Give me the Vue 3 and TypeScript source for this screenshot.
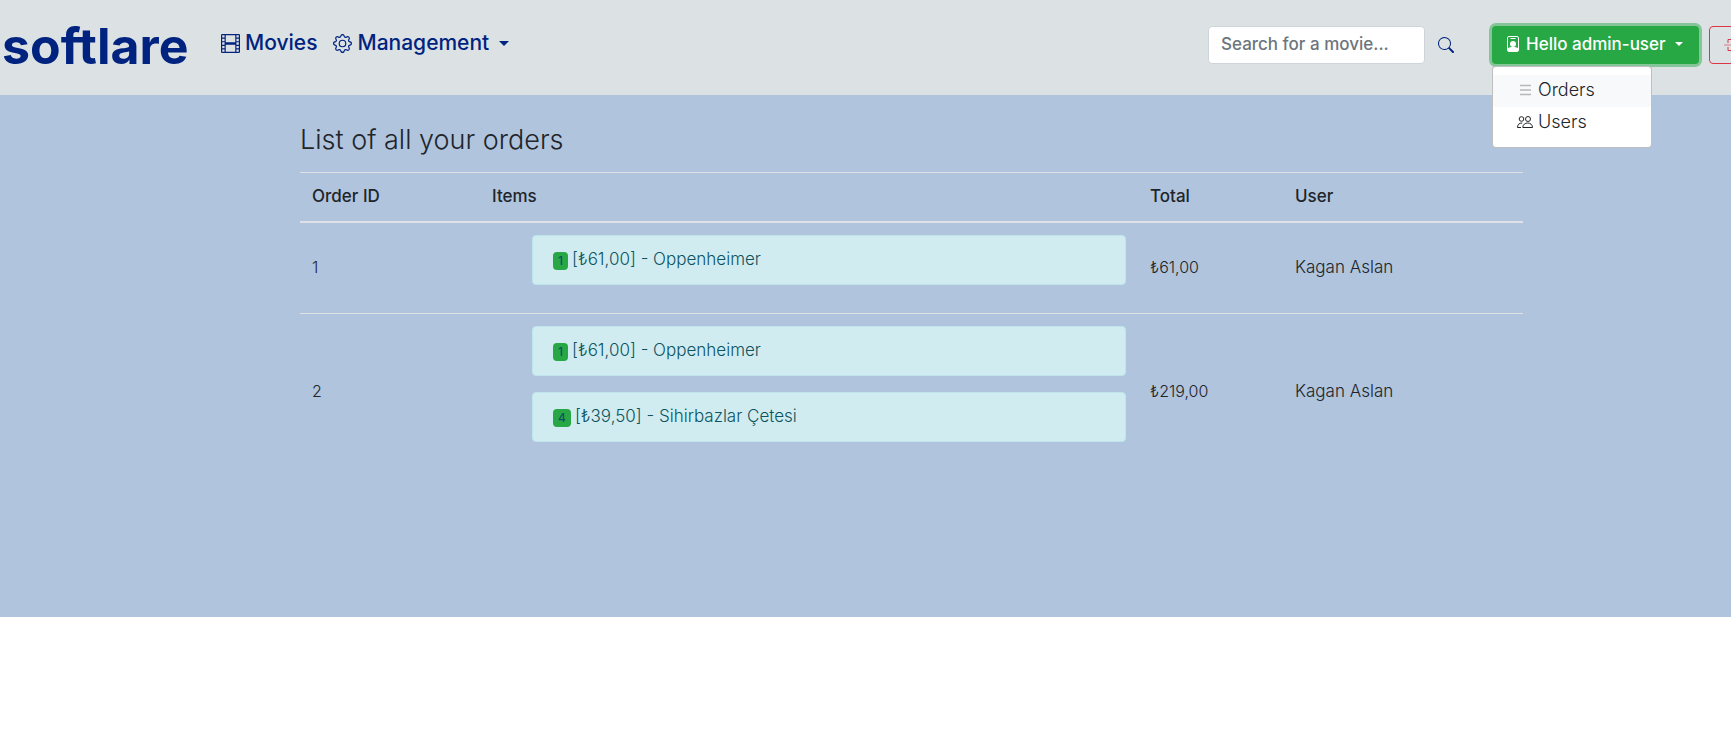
<script setup lang="ts">
import { ref } from 'vue'

interface OrderItem {
  quantity: number
  price: string
  title: string
}

interface Order {
  id: number
  items: OrderItem[]
  total: string
  user: string
}

const search = ref('')
const menuOpen = ref(true)

const orders: Order[] = [
  {
    id: 1,
    items: [{ quantity: 1, price: '₺61,00', title: 'Oppenheimer' }],
    total: '₺61,00',
    user: 'Kagan Aslan',
  },
  {
    id: 2,
    items: [
      { quantity: 1, price: '₺61,00', title: 'Oppenheimer' },
      { quantity: 4, price: '₺39,50', title: 'Sihirbazlar Çetesi' },
    ],
    total: '₺219,00',
    user: 'Kagan Aslan',
  },
]
</script>

<template>
  <div class="page">
    <header class="navbar">
      <a class="brand" href="#">softlare</a>
      <nav class="links">
        <a class="nav-link" href="#">
          <svg class="icon" viewBox="0 0 16 16" fill="currentColor" aria-hidden="true">
            <path d="M0 1a1 1 0 0 1 1-1h14a1 1 0 0 1 1 1v14a1 1 0 0 1-1 1H1a1 1 0 0 1-1-1V1zm4 0v6h8V1H4zm8 8H4v6h8V9zM1 1v2h2V1H1zm2 3H1v2h2V4zM1 7v2h2V7H1zm2 3H1v2h2v-2zm-2 3v2h2v-2H1zM15 1h-2v2h2V1zm-2 3v2h2V4h-2zm2 3h-2v2h2V7zm-2 3v2h2v-2h-2zm2 3h-2v2h2v-2z" />
          </svg>
          <span>Movies</span>
        </a>
        <button class="nav-link" type="button">
          <svg class="icon" viewBox="0 0 16 16" fill="currentColor" aria-hidden="true">
            <path d="M8 4.754a3.246 3.246 0 1 0 0 6.492 3.246 3.246 0 0 0 0-6.492zM5.754 8a2.246 2.246 0 1 1 4.492 0 2.246 2.246 0 0 1-4.492 0z" />
            <path d="M9.796 1.343c-.527-1.79-3.065-1.79-3.592 0l-.094.319a.873.873 0 0 1-1.255.52l-.292-.16c-1.64-.892-3.433.902-2.54 2.541l.159.292a.873.873 0 0 1-.52 1.255l-.319.094c-1.79.527-1.79 3.065 0 3.592l.319.094a.873.873 0 0 1 .52 1.255l-.16.292c-.892 1.64.901 3.434 2.541 2.54l.292-.159a.873.873 0 0 1 1.255.52l.094.319c.527 1.79 3.065 1.79 3.592 0l.094-.319a.873.873 0 0 1 1.255-.52l.292.16c1.64.893 3.434-.902 2.54-2.541l-.159-.292a.873.873 0 0 1 .52-1.255l.319-.094c1.79-.527 1.79-3.065 0-3.592l-.319-.094a.873.873 0 0 1-.52-1.255l.16-.292c.893-1.64-.902-3.433-2.541-2.54l-.292.159a.873.873 0 0 1-1.255-.52l-.094-.319zm-2.633.283c.246-.835 1.428-.835 1.674 0l.094.319a1.873 1.873 0 0 0 2.693 1.115l.291-.16c.764-.415 1.6.42 1.184 1.185l-.159.292a1.873 1.873 0 0 0 1.116 2.692l.318.094c.835.246.835 1.428 0 1.674l-.319.094a1.873 1.873 0 0 0-1.115 2.693l.16.291c.415.764-.42 1.6-1.185 1.184l-.291-.159a1.873 1.873 0 0 0-2.693 1.116l-.094.318c-.246.835-1.428.835-1.674 0l-.094-.319a1.873 1.873 0 0 0-2.692-1.115l-.292.16c-.764.415-1.6-.42-1.184-1.185l.159-.291A1.873 1.873 0 0 0 1.945 8.93l-.319-.094c-.835-.246-.835-1.428 0-1.674l.319-.094A1.873 1.873 0 0 0 3.06 4.377l-.16-.292c-.415-.764.42-1.6 1.185-1.184l.292.159a1.873 1.873 0 0 0 2.692-1.115l.094-.319z" />
          </svg>
          <span>Management</span>
          <i class="caret"></i>
        </button>
      </nav>

      <form class="search" @submit.prevent>
        <input v-model="search" type="text" placeholder="Search for a movie..." aria-label="Search for a movie" />
        <button type="submit" aria-label="Search">
          <svg viewBox="0 0 16 16" fill="currentColor" aria-hidden="true">
            <path d="M11.742 10.344a6.5 6.5 0 1 0-1.397 1.398h-.001c.03.04.062.078.098.115l3.85 3.85a1 1 0 0 0 1.415-1.414l-3.85-3.85a1.007 1.007 0 0 0-.115-.1zM12 6.5a5.5 5.5 0 1 1-11 0 5.5 5.5 0 0 1 11 0z" />
          </svg>
        </button>
      </form>

      <div class="account">
        <button class="account-toggle" type="button" :aria-expanded="menuOpen" @click="menuOpen = !menuOpen">
          <svg viewBox="0 0 16 16" aria-hidden="true">
            <rect x="2.5" y="0.5" width="11" height="15" rx="1.5" fill="none" stroke="currentColor" />
            <path d="M5.500 2.500h5" stroke="currentColor" />
            <circle cx="8" cy="8" r="3" fill="currentColor" />
            <path d="M2.500 12.500c1.500-1.300 3.500-1.500 5.500-1.500s4 .2 5.500 1.500v2.500h-11z" fill="currentColor" />
          </svg>
          <span>Hello admin-user</span>
          <i class="caret small"></i>
        </button>
        <div v-if="menuOpen" class="menu">
          <a class="active" href="#">
            <svg class="muted" viewBox="0 0 16 16" fill="none" stroke="currentColor" stroke-width="1.500" aria-hidden="true">
              <path d="M3 3.500h11M3 8h11M3 12.500h11" />
            </svg>
            <span>Orders</span>
          </a>
          <a href="#">
            <svg viewBox="0 0 16 16" fill="none" stroke="currentColor" aria-hidden="true">
              <circle cx="4.500" cy="5" r="2.300" />
              <circle cx="11" cy="5" r="2.500" />
              <path d="M5.800 13.500c0-6 9.700-6 9.700 0zM4 13.500H.5c0-3 1.600-4.500 4.700-4.500" />
            </svg>
            <span>Users</span>
          </a>
        </div>
      </div>

      <button class="logout" type="button" aria-label="Log out">
        <svg viewBox="0 0 16 16" fill="none" stroke="currentColor" aria-hidden="true">
          <path d="M4 6V2.500h9V6M4 10v3.500h9V10" />
          <path class="faded" d="M0 8h16" stroke-width="2" />
        </svg>
      </button>
    </header>

    <main class="content">
      <h1>List of all your orders</h1>
      <table>
        <thead>
          <tr>
            <th class="col-id" scope="col">Order ID</th>
            <th class="col-items" scope="col">Items</th>
            <th class="col-total" scope="col">Total</th>
            <th scope="col">User</th>
          </tr>
        </thead>
        <tbody>
          <tr v-for="order in orders" :key="order.id">
            <td class="number">{{ order.id }}</td>
            <td class="items">
              <ul>
                <li v-for="item in order.items" :key="item.title">
                  <span class="badge">{{ item.quantity }}</span>
                  <span>[{{ item.price }}] - {{ item.title }}</span>
                </li>
              </ul>
            </td>
            <td class="number">{{ order.total }}</td>
            <td>{{ order.user }}</td>
          </tr>
        </tbody>
      </table>
    </main>
  </div>
</template>

<style>
body {
  overflow-x: hidden;
  background: #fff;
}
</style>

<style scoped>
.page {
  overflow-x: hidden;
  padding-bottom: 129px;
  color: #212529;
  font-family: Inter, "Noto Sans", sans-serif;
  font-size: 17px;
  font-weight: 300;
  line-height: 24px;
}

.page *,
.page *::before {
  box-sizing: border-box;
}

svg {
  flex: none;
  width: 16px;
  height: 16px;
}

button,
input {
  font-family: inherit;
}

a {
  text-decoration: none;
}

.navbar {
  display: flex;
  align-items: flex-start;
  height: 95px;
  padding-left: 2px;
  background: #dce1e4;
}

.brand {
  flex: none;
  width: 212px;
  padding-top: 16px;
  color: #00237f;
  font-size: 50px;
  font-weight: 700;
  line-height: 60px;
}

.links {
  display: flex;
  flex: 1;
  gap: 16px;
  padding: 28px 0 0 7px;
}

.nav-link {
  display: flex;
  align-items: center;
  gap: 5px;
  padding: 0;
  border: 0;
  background: none;
  color: #00237f;
  font-size: 21px;
  font-weight: 500;
  line-height: 30px;
}

.nav-link .icon {
  width: 19px;
  height: 19px;
}

.caret {
  margin-left: 5px;
  border: 5px solid transparent;
  border-top-color: currentColor;
  border-bottom: 0;
}

.caret.small {
  margin-left: 4px;
  border-width: 4px 4px 0;
}

.search {
  display: flex;
  align-items: center;
  flex: none;
  width: 284px;
  padding-top: 26px;
}

.search input {
  width: 217px;
  height: 38px;
  padding: 5px 12px 7px;
  border: 1px solid #ced4da;
  border-radius: 4px;
  background: #fff;
  color: #495057;
  font-size: 17px;
  font-weight: 500;
}

.search input::placeholder {
  color: #6c757d;
  opacity: 1;
}

.search button {
  display: flex;
  padding: 0 13px;
  border: 0;
  background: none;
  color: #00237f;
}

.account {
  position: relative;
  flex: none;
  padding-top: 26px;
}

.account-toggle {
  display: flex;
  align-items: center;
  gap: 5px;
  width: 207px;
  height: 38px;
  padding: 0 13px 2px;
  border: 0;
  border-radius: 4px;
  background: #28a745;
  box-shadow: 0 0 0 3px #84c698;
  color: #fff;
  font-size: 17px;
  font-weight: 500;
  white-space: nowrap;
}

.menu {
  position: absolute;
  top: 100%;
  left: 0;
  width: 160px;
  margin-top: 2px;
  padding: 8px 0;
  border: 1px solid rgba(0, 0, 0, 0.25);
  border-radius: 4px;
  background: #fff;
}

.menu a {
  display: flex;
  align-items: center;
  gap: 5px;
  padding: 3px 24px 5px;
  color: #212529;
  font-size: 18px;
}

.menu .active {
  background: #f8f9fa;
}

.muted {
  color: #b5b7b9;
}

.logout {
  flex: none;
  width: 46px;
  height: 38px;
  margin: 26px -24px 0 10px;
  padding: 10px 14px;
  border: 1px solid #dc3545;
  border-radius: 4px;
  background: none;
  color: #dc3545;
}

.faded {
  opacity: 0.3;
}

.content {
  min-height: 522px;
  padding: 30px 208px 24px 300px;
  background: #b0c4de;
}

h1 {
  margin: 0 0 18px;
  font-size: 27px;
  font-weight: 300;
  line-height: 29px;
}

table {
  width: 100%;
  border-collapse: collapse;
  table-layout: fixed;
}

.col-id {
  width: 180px;
}

.col-items {
  width: 658px;
}

.col-total {
  width: 145px;
}

th,
td {
  padding: 11px 12px 13px;
  border-top: 1px solid #dee2e6;
  text-align: left;
  vertical-align: middle;
}

th {
  border-bottom: 2px solid #dee2e6;
  font-weight: 500;
}

.items {
  padding: 12px;
}

.number {
  font-size: 16px;
}

ul {
  margin: 0;
  padding: 0 0 0 40px;
  list-style: none;
}

li {
  display: flex;
  align-items: center;
  gap: 4px;
  height: 50px;
  margin-bottom: 16px;
  padding: 0 20px 2px;
  border: 1px solid #bee5eb;
  border-radius: 4px;
  background: #d1ecf1;
  color: #0c5460;
}

.badge {
  margin-top: 4px;
  padding: 3px 5px;
  border-radius: 4px;
  background: #28a745;
  font-size: 12px;
  font-weight: 500;
  line-height: 12px;
}
</style>
